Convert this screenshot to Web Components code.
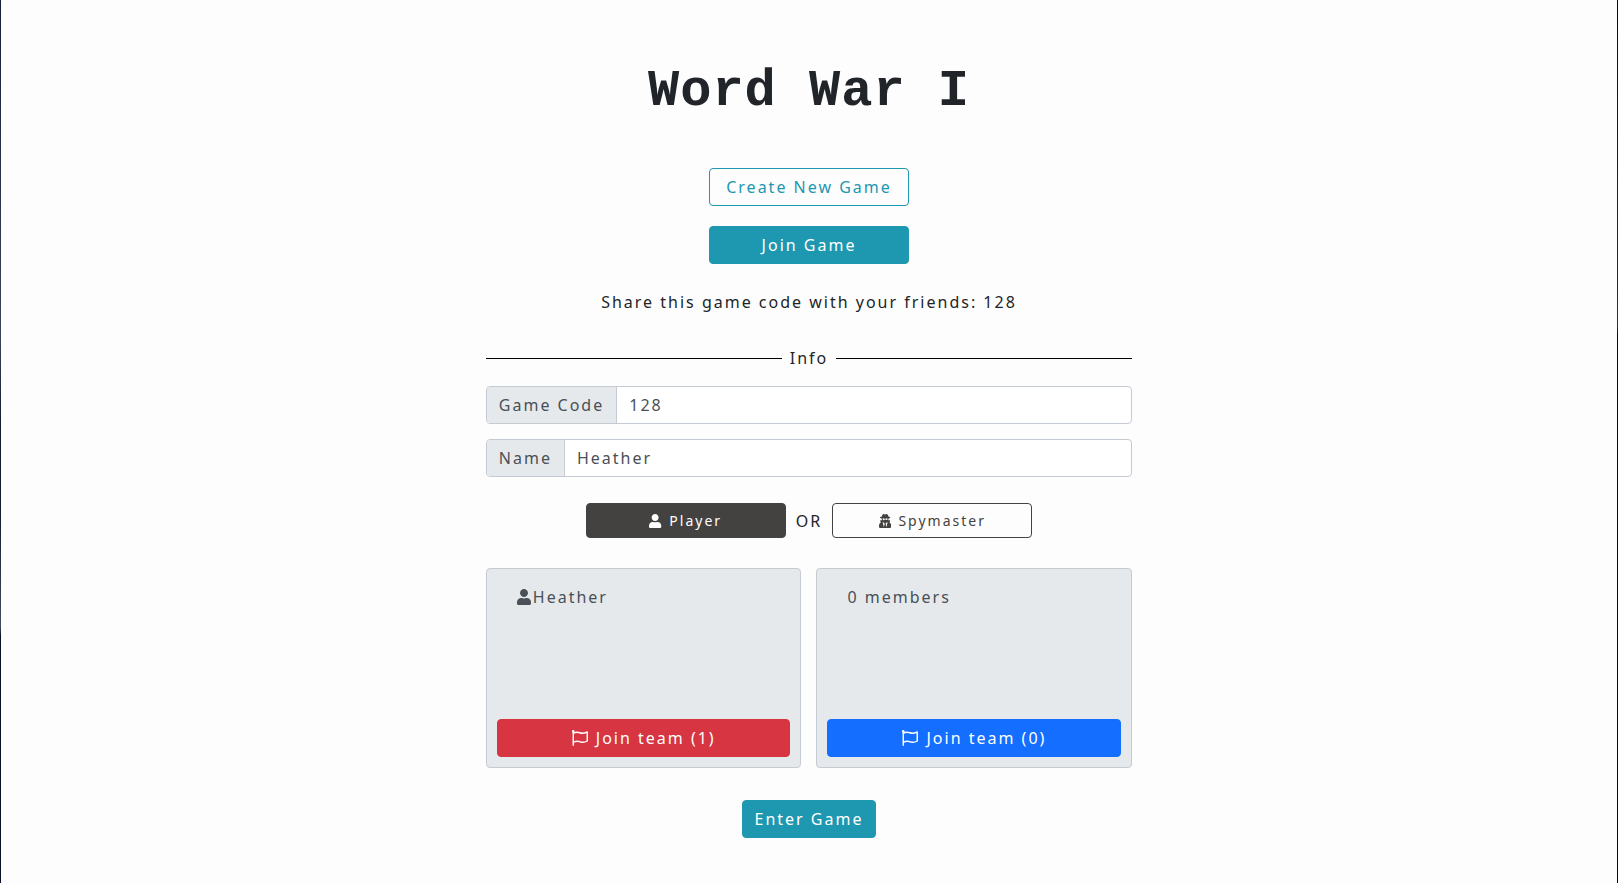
<!DOCTYPE html>
<html lang="en">
<head>
<meta charset="utf-8">
<title>Word War I</title>
<style>
  body {
    margin: 0;
    background:
      linear-gradient(#16203a, #39445a 38%, #141c30 48%, #141c30 58%, #444b5e 71%, #0b1226 72%, #0b1226) left / 50% 100% no-repeat,
      linear-gradient(#050a18, #252f42 37%, #08090d 38%, #08090d) right / 50% 100% no-repeat;
  }
</style>
</head>
<body>
<game-lobby></game-lobby>

<script>
const ICONS = {
  user: ['0 0 448 512', '<path d="M224 256c70.700 0 128-57.300 128-128S294.700 0 224 0 96 57.300 96 128s57.300 128 128 128zm89.600 32h-16.700c-22.200 10.200-46.900 16-72.900 16s-50.600-5.800-72.900-16h-16.700C60.200 288 0 348.200 0 422.400V464c0 26.500 21.500 48 48 48h352c26.500 0 48-21.500 48-48v-41.600c0-74.200-60.200-134.400-134.400-134.400z"/>'],
  spy: ['0 0 448 512', '<path fill-rule="evenodd" d="M383.900 308.300l23.900-62.600c4-10.500-3.700-21.700-15-21.700h-58.500c11-18.900 17.800-40.600 17.800-64v-.3c39.200-7.800 64-19.100 64-31.700 0-13.300-27.300-25.100-70.100-33-9.200-32.800-27-65.800-40.600-82.800-9.500-11.900-25.900-15.600-39.500-8.800l-27.600 13.800c-9 4.500-19.600 4.500-28.600 0L182.100 3.400c-13.600-6.800-30-3.100-39.500 8.800-13.500 17-31.400 50-40.600 82.800-42.700 7.900-70 19.700-70 33 0 12.600 24.800 23.900 64 31.700v.3c0 23.400 6.800 45.100 17.800 64H56.300c-11.500 0-19.200 11.700-14.700 22.300l25.800 60.200C27.300 329.800 0 372.700 0 422.400v44.800C0 491.900 20.100 512 44.800 512h358.400c24.700 0 44.800-20.100 44.800-44.800v-44.800c0-48.400-25.800-90.400-64.100-114.100zM176 480l-41.600-192 49.600 32 24 40-32 120zm96 0l-32-120 24-40 49.600-32L272 480zm41.700-298.500c-3.900 11.900-7 24.600-16.500 33.400-10.100 9.300-48 22.400-64-25-2.800-8.400-15.400-8.400-18.300 0-17 50.200-56 32.400-64 25-9.500-8.800-12.700-21.500-16.500-33.400-.8-2.500-6.300-5.700-6.300-5.800v-10.800c28.300 3.600 61 5.800 96 5.800s67.700-2.100 96-5.800v10.800c-.1.100-5.600 3.200-6.400 5.800z"/>'],
  flag: ['0 0 512 512', '<circle cx="40" cy="44" r="42"/><path fill="none" stroke="currentColor" stroke-width="46" stroke-linecap="round" stroke-linejoin="round" d="M40 44V489M40 104C76 84 118 72 168 72c66 0 98 32 166 32 52 0 98-16 154-40V352c-46 30-92 42-140 42-66 0-100-32-170-32-50 0-92 10-138 32"/>']
};

function define(name, html, init) {
  const template = document.createElement('template');
  template.innerHTML = html;
  customElements.define(name, class extends HTMLElement {
    constructor() {
      super();
      this.attachShadow({ mode: 'open' }).append(template.content.cloneNode(true));
    }
    connectedCallback() { if (init) init(this, this.shadowRoot); }
  });
}

define('game-icon', `
  <style>
    :host { display: inline-block; height: 1em; margin-right: 2px; vertical-align: -2px; }
    svg { display: block; height: 100%; fill: currentColor; }
  </style>
  <svg aria-hidden="true"></svg>`,
  (el, root) => {
    const [box, shapes] = ICONS[el.getAttribute('name')];
    const svg = root.querySelector('svg');
    svg.setAttribute('viewBox', box);
    svg.innerHTML = shapes;
  });

define('game-button', `
  <style>
    :host { display: block; --tone: #1e97b0; --ink: #fff; }
    :host([wide]) { width: 200px; }
    :host([tone=red]) { --tone: #d63541; }
    :host([tone=blue]) { --tone: #146eff; }
    :host([tone=dark]) { --tone: #444240; }
    button {
      display: block; box-sizing: border-box; width: 100%; margin: 0;
      padding: 6px 12px; border: 1px solid var(--tone); border-radius: 4px;
      background: var(--tone); color: var(--ink);
      font: inherit; line-height: 24px; letter-spacing: inherit; text-align: center;
      white-space: nowrap; cursor: pointer;
    }
    :host([outline]) button { background: transparent; color: var(--tone); }
    :host([small]) button { font-size: 14px; line-height: 21px; }
  </style>
  <button type="button"><slot></slot></button>`);

define('info-divider', `
  <style>
    :host { display: flex; align-items: center; gap: 8px; }
    :host::before, :host::after { content: ""; flex: 1; height: 1px; background: #000; }
  </style>
  <slot></slot>`);

define('labeled-input', `
  <style>
    :host { display: flex; border: 1px solid #c4cbd2; border-radius: 4px; overflow: hidden; background: #fff; color: #495057; }
    label { padding: 6px 12px; background: #e5e9ec; border-right: 1px solid #c4cbd2; white-space: nowrap; }
    input {
      flex: 1; min-width: 0; padding: 6px 12px; border: 0; outline: 0; background: none;
      color: inherit; font: inherit; letter-spacing: inherit;
    }
  </style>
  <label for="field"></label><input id="field" type="text">`,
  (el, root) => {
    root.querySelector('label').textContent = el.getAttribute('label');
    root.querySelector('input').value = el.getAttribute('value');
  });

define('team-card', `
  <style>
    :host {
      display: flex; flex-direction: column; justify-content: space-between; box-sizing: border-box;
      min-height: 200px; padding: 10px; border: 1px solid #c4cbd2; border-radius: 4px;
      background: #e5e9ec; color: #495057;
    }
    .members { padding: 6px 20px; }
  </style>
  <div class="members"><slot></slot></div>
  <slot name="action"></slot>`);

define('game-lobby', `
  <style>
    :host {
      display: flex; flex-direction: column; align-items: center; box-sizing: border-box;
      min-height: 100vh; margin: 0 1px; padding: 60px 0 40px;
      background: #fdfdfd; color: #212529;
      font: 16px/24px "Noto Sans", "Liberation Sans", sans-serif; letter-spacing: 2px;
    }
    h1 { margin: 0 0 44px; font: bold 52px/64px "Liberation Mono", monospace; letter-spacing: 1px; }
    .start { display: grid; gap: 20px; margin-bottom: 26px; }
    p { margin: 0 0 32px; text-align: center; }
    form { width: 40%; min-width: 520px; display: grid; }
    info-divider { margin-bottom: 16px; }
    labeled-input { margin-bottom: 15px; }
    .roles { display: flex; justify-content: center; align-items: center; gap: 10px; margin: 11px 0 30px; }
    .teams { display: grid; grid-template-columns: 1fr 1fr; gap: 15px; margin-bottom: 32px; }
    .enter { justify-self: center; }
  </style>
  <h1>Word War I</h1>
  <div class="start">
    <game-button wide outline>Create New Game</game-button>
    <game-button wide>Join Game</game-button>
  </div>
  <p>Share this game code with your friends: 128</p>
  <form>
    <info-divider>Info</info-divider>
    <labeled-input label="Game Code" value="128"></labeled-input>
    <labeled-input label="Name" value="Heather"></labeled-input>
    <div class="roles">
      <game-button wide small tone="dark"><game-icon name="user"></game-icon> Player</game-button>
      <span>OR</span>
      <game-button wide small outline tone="dark"><game-icon name="spy"></game-icon> Spymaster</game-button>
    </div>
    <div class="teams">
      <team-card><game-icon name="user"></game-icon>Heather
        <game-button slot="action" tone="red"><game-icon name="flag"></game-icon> Join team (1)</game-button>
      </team-card>
      <team-card>0 members
        <game-button slot="action" tone="blue"><game-icon name="flag"></game-icon> Join team (0)</game-button>
      </team-card>
    </div>
    <game-button class="enter">Enter Game</game-button>
  </form>`);
</script>
</body>
</html>
